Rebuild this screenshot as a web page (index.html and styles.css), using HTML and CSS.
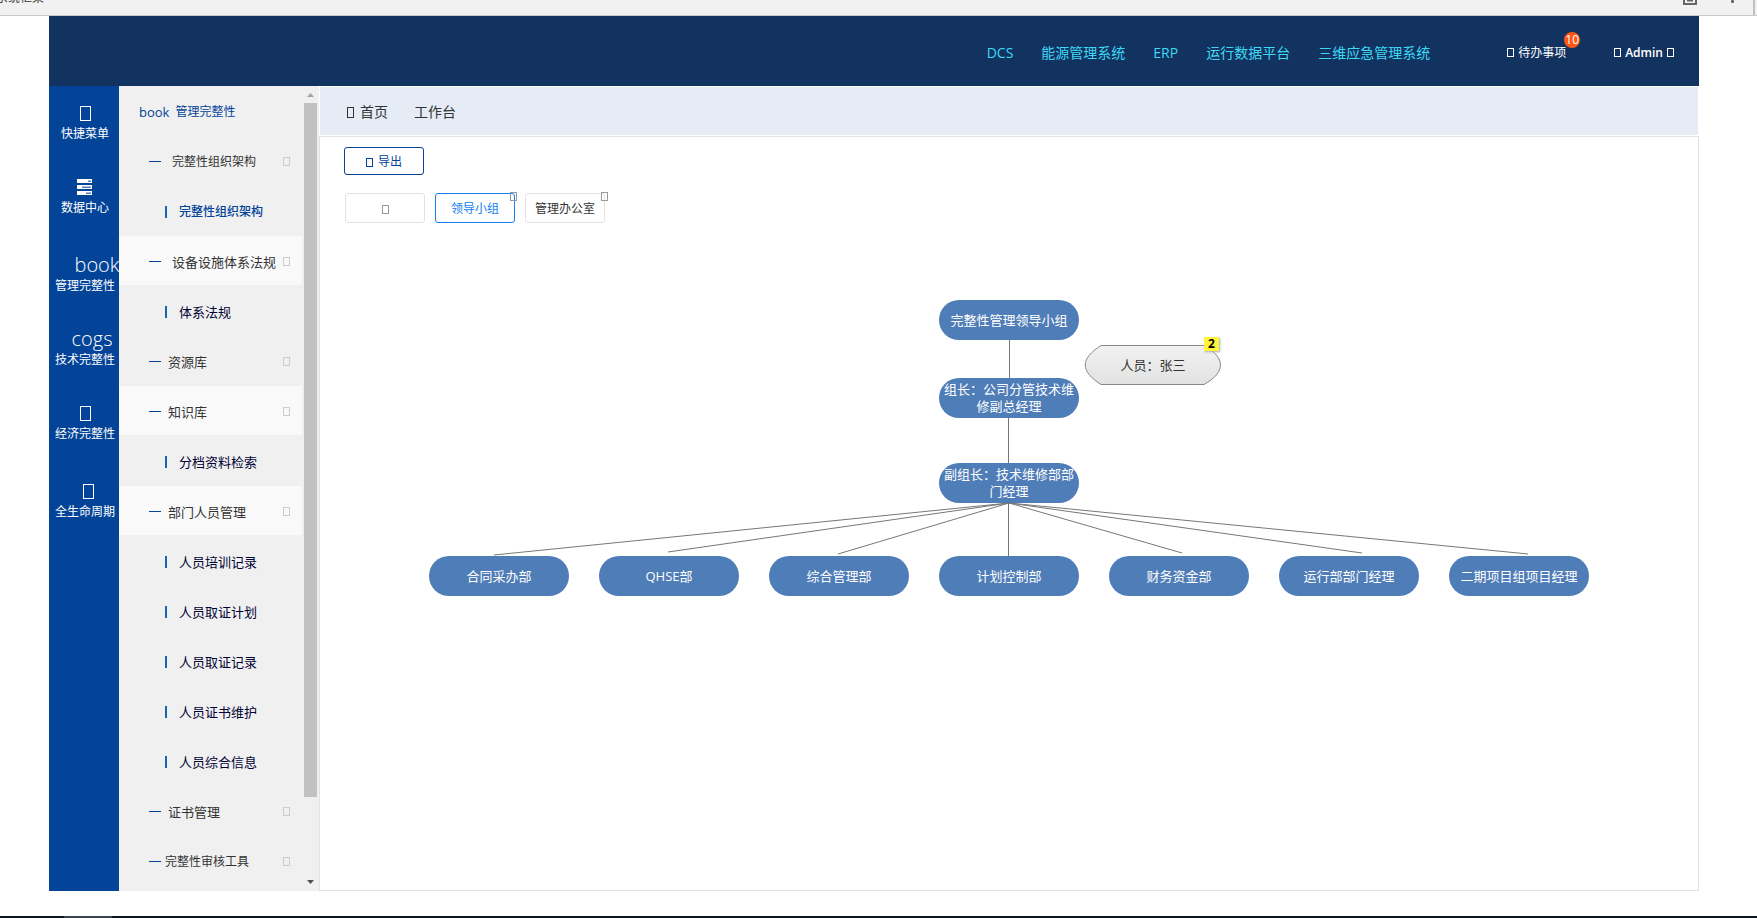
FILE: index.html
```html
<!DOCTYPE html>
<html lang="zh-CN">
<head>
<meta charset="utf-8">
<title>完整性组织架构</title>
<link rel="stylesheet" href="styles.css">
</head>
<body>
<div class="browser-bar">
  <span class="browser-text">系统框架</span>
  <svg class="browser-icons" width="74" height="15" viewBox="0 0 74 15" aria-hidden="true">
    <path d="M1 0V4H13V0M4 0.5H10" fill="none" stroke="#666" stroke-width="2"/>
    <rect x="48" y="0" width="3" height="3" rx="1" fill="#666"/>
    <rect x="70" y="0" width="2" height="15" fill="#c2c2c2"/>
  </svg>
</div>

<div class="app">
  <header class="header">
    <nav class="systems">
      <a href="#">DCS</a>
      <a href="#">能源管理系统</a>
      <a href="#">ERP</a>
      <a href="#">运行数据平台</a>
      <a href="#">三维应急管理系统</a>
    </nav>
    <button class="user-btn todo"><i class="box"></i>待办事项<span class="count">10</span></button>
    <button class="user-btn admin"><i class="box"></i>Admin<i class="box"></i></button>
  </header>

  <div class="body">
    <nav class="rail">
      <button class="rail-item"><span class="rail-icon"><i class="box large"></i></span><span>快捷菜单</span></button>
      <button class="rail-item">
        <span class="rail-icon">
          <svg width="16" height="16" viewBox="0 0 16 16" aria-hidden="true">
            <path d="M0 0H15V4H0ZM0 6H15V10H0ZM0 12H15V16H0Z" fill="#fff"/>
            <path d="M11 1.500H14V3H11ZM5 7.500H14V9H5ZM9 13.500H14V15H9Z" fill="#4f7fba"/>
          </svg>
        </span>
        <span>数据中心</span>
      </button>
      <button class="rail-item spaced"><span class="rail-icon word wide">book</span><span>管理完整性</span></button>
      <button class="rail-item"><span class="rail-icon word">cogs</span><span>技术完整性</span></button>
      <button class="rail-item"><span class="rail-icon"><i class="box large"></i></span><span>经济完整性</span></button>
      <button class="rail-item spaced"><span class="rail-icon shifted"><i class="box large"></i></span><span>全生命周期</span></button>
    </nav>

    <aside class="sidebar">
      <div class="menu">
        <div class="menu-title"><span>book</span>管理完整性</div>
        <a class="group far small" href="#">完整性组织架构<i class="box faint"></i></a>
        <a class="leaf current" href="#">完整性组织架构</a>
        <a class="group far lit" href="#">设备设施体系法规<i class="box faint"></i></a>
        <a class="leaf" href="#">体系法规</a>
        <a class="group" href="#">资源库<i class="box faint"></i></a>
        <a class="group lit" href="#">知识库<i class="box faint"></i></a>
        <a class="leaf" href="#">分档资料检索</a>
        <a class="group lit" href="#">部门人员管理<i class="box faint"></i></a>
        <a class="leaf" href="#">人员培训记录</a>
        <a class="leaf" href="#">人员取证计划</a>
        <a class="leaf" href="#">人员取证记录</a>
        <a class="leaf" href="#">人员证书维护</a>
        <a class="leaf" href="#">人员综合信息</a>
        <a class="group" href="#">证书管理<i class="box faint"></i></a>
        <a class="group near small" href="#">完整性审核工具<i class="box faint"></i></a>
      </div>
      <div class="scrollbar" aria-hidden="true">
        <svg width="13" height="17" viewBox="0 0 13 17"><path d="M3 11H10L6.500 7Z" fill="#a3a3a3"/></svg>
        <div class="track"><div class="thumb"></div></div>
        <svg width="13" height="17" viewBox="0 0 13 17"><path d="M3 6H10L6.500 10Z" fill="#505050"/></svg>
      </div>
    </aside>

    <main class="main">
      <nav class="crumbs">
        <a href="#"><i class="box crumb"></i>首页</a>
        <a href="#">工作台</a>
      </nav>
      <section class="panel">
        <button class="export"><i class="box"></i>导出</button>
        <div class="tabs">
          <button class="tab" aria-label="新增"><i class="box grey"></i></button>
          <button class="tab active">领导小组<i class="box grey close"></i></button>
          <button class="tab">管理办公室<i class="box grey close"></i></button>
        </div>
        <div class="chart">
          <svg class="links" width="1380" height="380" viewBox="320 240 1380 380" aria-hidden="true">
            <g fill="none" stroke="#777" stroke-width="1">
              <path d="M1009.500 339V379M1008.500 417V464M1008.500 503V557"/>
              <path d="M1009 503L494 555M1009 503L668 552M1009 503L838 554M1009 503L1182 553M1009 503L1362 553M1009 503L1528 554"/>
            </g>
            <defs>
              <linearGradient id="tip" x1="0" y1="0" x2="0" y2="1">
                <stop offset="0" stop-color="#f2f2f2"/><stop offset="1" stop-color="#e2e2e2"/>
              </linearGradient>
            </defs>
            <path d="M1101 345.500H1204C1226 358 1226 372 1204 384.500H1101C1080 371 1080 359 1101 345.500Z" fill="url(#tip)" stroke="#888"/>
          </svg>
          <div class="node n1">完整性管理领导小组</div>
          <div class="node n2">组长：公司分管技术维修副总经理</div>
          <div class="node n3">副组长：技术维修部部门经理</div>
          <div class="person">人员：张三</div>
          <span class="mark">2</span>
          <div class="departments">
            <div class="node">合同采办部</div>
            <div class="node">QHSE部</div>
            <div class="node">综合管理部</div>
            <div class="node">计划控制部</div>
            <div class="node">财务资金部</div>
            <div class="node">运行部部门经理</div>
            <div class="node">二期项目组项目经理</div>
          </div>
        </div>
      </section>
    </main>
  </div>
</div>
<div class="taskbar"><span class="task"></span></div>
</body>
</html>
```
FILE: styles.css
```css
* { box-sizing: border-box; }

body {
  margin: 0;
  height: 100vh;
  display: flex;
  flex-direction: column;
  overflow: hidden;
  background: #fff;
  color: #333;
  font: 12px/18px "Open Sans", "Noto Sans CJK SC", sans-serif;
}

a { color: inherit; text-decoration: none; }
button { font: inherit; color: inherit; background: none; border: 0; padding: 0; }

/* Placeholder glyph */
.box {
  display: inline-block;
  flex: none;
  width: 7px;
  height: 9px;
  border: 1px solid currentColor;
}
.box.large { width: 11px; height: 15px; }
.box.crumb { height: 11px; margin-right: 6px; }
.box.faint { color: #ccc; }
.box.grey { color: #999; }

.browser-bar {
  flex: none;
  position: relative;
  height: 16px;
  overflow: hidden;
  background: #f1f1f1;
  border-bottom: 1px solid #c8c8c8;
}
.browser-text { position: absolute; left: -4px; top: -11px; }
.browser-icons { position: absolute; right: 0; top: 0; }

.app {
  flex: 1;
  min-height: 0;
  display: flex;
  flex-direction: column;
  margin: 0 58px 25px 49px;
}

.header {
  flex: none;
  height: 70px;
  display: flex;
  align-items: center;
  justify-content: flex-end;
  padding: 3px 25px 0 0;
  background: #12325f;
  color: #fff;
}
.systems { display: flex; gap: 28px; margin-right: 77px; font-size: 14px; line-height: 20px; color: #3fd9f5; }
.user-btn { position: relative; display: flex; align-items: center; gap: 4px; }
.admin { margin-left: 48px; font-weight: 600; }
.count {
  position: absolute;
  right: -14px;
  top: -12px;
  width: 16px;
  height: 16px;
  border-radius: 8px;
  background: #ff5714;
  line-height: 16px;
  text-align: center;
}

.body { flex: 1; min-height: 0; display: flex; }

.rail {
  flex: none;
  width: 70px;
  display: flex;
  flex-direction: column;
  gap: 32px;
  padding-top: 15px;
  overflow: hidden;
  background: #034398;
  color: #fff;
}
.rail-item { display: flex; flex-direction: column; align-items: center; white-space: nowrap; padding-left: 2px; }
.rail-item.spaced { margin-top: 4px; }
.rail-icon { height: 24px; display: flex; align-items: center; }
.rail-icon.word { font-size: 20px; font-weight: 300; padding-left: 14px; }
.rail-icon.wide { padding-left: 24px; }
.rail-icon.shifted { padding-left: 6px; }

.sidebar { flex: none; width: 200px; display: flex; overflow: hidden; background: #f0f0f0; }
.menu { width: 183px; margin-right: 2px; }
.menu > * { display: flex; align-items: center; height: 49px; margin-bottom: 1px; padding-top: 2px; font-size: 13px; }
.menu > .small, .menu > .current, .menu > .menu-title { font-size: 12px; }
.menu > .menu-title { padding-left: 20px; gap: 6px; color: #034398; }
.menu-title span { font-size: 13px; }
.menu > .group { padding-left: 30px; padding-right: 12px; }
.group::before { content: ""; width: 12px; height: 1px; margin-right: 7px; background: #034398; }
.group.far::before { margin-right: 11px; }
.group.near::before { margin-right: 4px; }
.group .box { margin-left: auto; }
.lit { background: #f9f9f9; }
.menu > .leaf { padding-left: 46px; color: #003; }
.leaf::before { content: ""; width: 2px; height: 12px; margin: 1px 12px 0 0; background: #1767b0; }
.menu > .current { color: #034398; font-weight: 500; }

.scrollbar { width: 13px; display: flex; flex-direction: column; }
.scrollbar svg { flex: none; }
.track { flex: 1; }
.thumb { height: 90%; background: #c1c1c1; }

.main { flex: 1; min-width: 0; display: flex; flex-direction: column; padding-top: 1px; }
.crumbs {
  flex: none;
  height: 48px;
  margin: 0 1px 1px;
  display: flex;
  align-items: center;
  gap: 26px;
  padding: 2px 27px 0;
  background: #e5ecf5;
  font-size: 14px;
}
.crumbs a { display: flex; align-items: center; }
.panel { flex: 1; min-height: 0; overflow: hidden; border: 1px solid #e2e2e2; padding-top: 10px; }

.export, .tab { display: flex; align-items: center; justify-content: center; border-radius: 3px; width: 80px; padding-top: 2px; }
.export { height: 28px; gap: 5px; margin-left: 24px; border: 1px solid #034398; color: #034398; }
.tabs { display: flex; gap: 10px; margin: 18px 0 0 25px; }
.tab { position: relative; height: 30px; border: 1px solid #e2e2e2; }
.tab.active { border-color: #1080f0; color: #1080f0; }
.close { position: absolute; top: -2px; right: -3px; }
.tab:last-child .close { right: -4px; }

.chart { position: relative; height: 380px; margin-top: 17px; }
.links { position: absolute; left: 0; top: 0; }
.node {
  width: 140px;
  height: 40px;
  display: flex;
  align-items: center;
  justify-content: center;
  padding: 0 4px;
  border-radius: 20px;
  background: #4f7db8;
  color: #fff;
  font-size: 13px;
  line-height: 17px;
  text-align: center;
}
.n1, .n2, .n3 { position: absolute; left: 619px; }
.n1 { top: 60px; }
.n2 { top: 138px; }
.n3 { top: 223px; }
.person { position: absolute; left: 765px; top: 105px; width: 136px; line-height: 40px; font-size: 13px; text-align: center; }
.mark {
  position: absolute;
  left: 884px;
  top: 97px;
  width: 15px;
  height: 14px;
  background: #fff43c;
  box-shadow: 1px 1px 2px #aaa;
  color: #000;
  font-weight: 700;
  line-height: 14px;
  text-align: center;
}
.departments { position: absolute; left: 109px; top: 316px; display: flex; gap: 30px; }

.taskbar { flex: none; display: flex; height: 2px; background: #0c1620; }
.task { width: 48px; margin-left: 64px; background: #3b444d; }
```
